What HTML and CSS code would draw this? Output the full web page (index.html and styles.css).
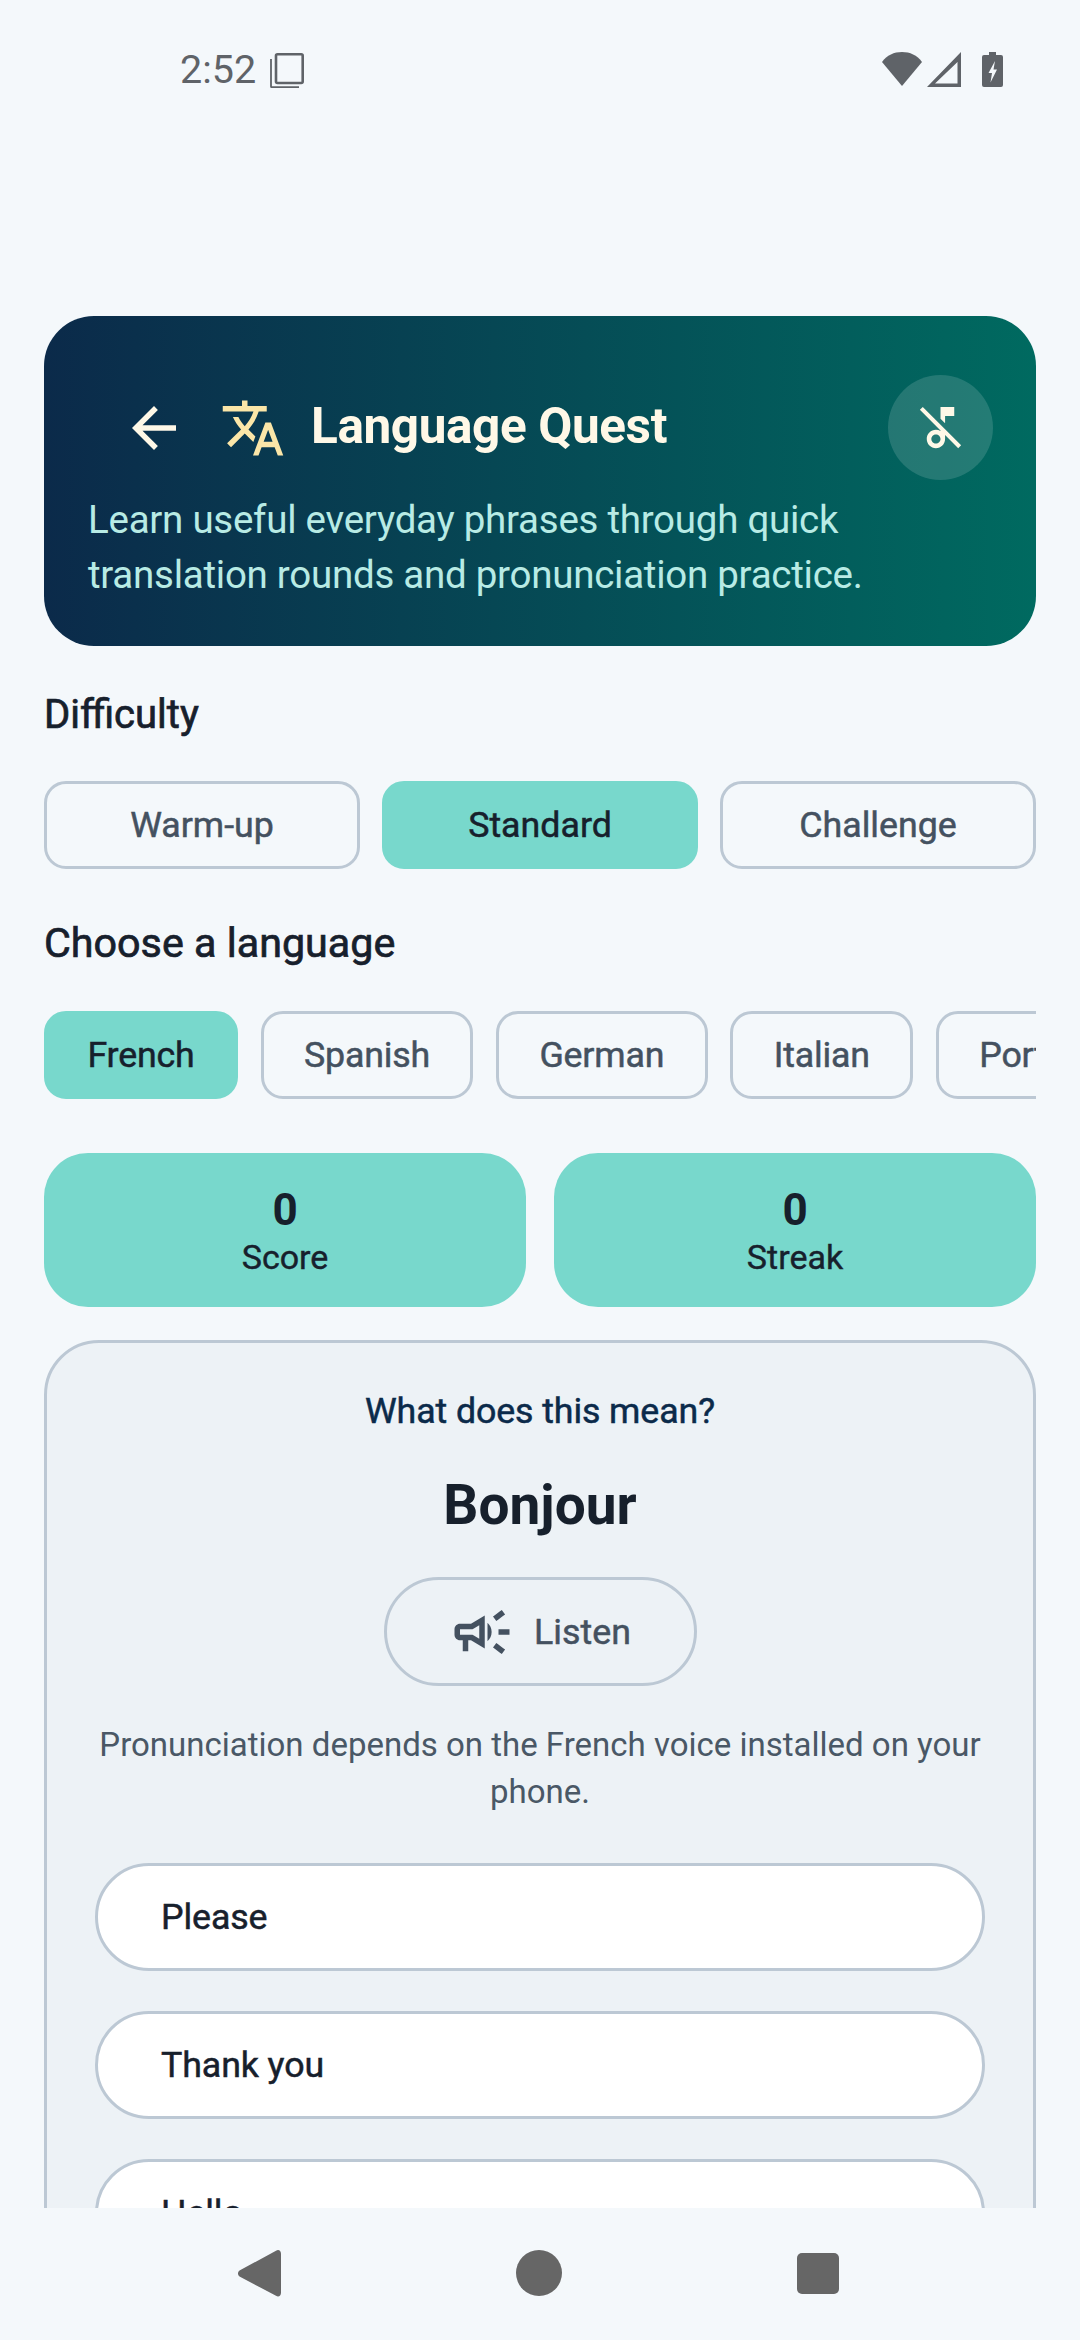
FILE: index.html
```html
<!DOCTYPE html>
<html lang="en">
<head>
<meta charset="utf-8">
<title>Language Quest</title>
<link rel="stylesheet" href="styles.css">
</head>
<body>
<div class="screen">
  <main class="content">
    <div class="status">
      <div class="status-left">
        <span class="time">2:52</span>
        <svg class="sb-copy" viewBox="0 0 34 35"><rect x="6" y="1.300" width="26.700" height="28.700" rx="1.500" fill="none" stroke="#5f6368" stroke-width="2.600"/><path d="M1 6v27.500a.7.7 0 0 0 .7.7H29" fill="none" stroke="#5f6368" stroke-width="1.800"/></svg>
      </div>
      <div class="status-right">
        <svg class="sb-wifi" viewBox="0 0 40 34"><path d="M0 10C5 3 12 0 20 0s15 3 20 10L20 34z" fill="#5f6368"/></svg>
        <svg class="sb-signal" viewBox="0 0 34 35"><path d="M34 0v35H0z M30.500 10 8 31.500h22.500z" fill="#5f6368" fill-rule="evenodd"/></svg>
        <svg class="sb-batt" viewBox="0 0 21 35"><path d="M7 0h7v3h5a2 2 0 0 1 2 2v28a2 2 0 0 1-2 2H2a2 2 0 0 1-2-2V5a2 2 0 0 1 2-2h5z" fill="#5f6368"/><path d="M13 9 6.500 21h3.500l-1.500 9.500 6.500-13h-3.500z" fill="#f4f8fb"/></svg>
      </div>
    </div>

    <section class="hero">
      <div class="hero-head">
        <svg class="ic-back" viewBox="0 0 24 24"><path d="M20 11H7.830l5.590-5.590L12 4l-8 8 8 8 1.410-1.410L7.830 13H20v-2z"/></svg>
        <svg class="ic-translate" viewBox="0 0 24 24"><path d="M12.870 15.070l-2.540-2.510.03-.03c1.740-1.940 2.980-4.170 3.710-6.530H17V4h-7V2H8v2H1v1.990h11.170C11.500 7.920 10.440 9.750 9 11.350 8.070 10.320 7.300 9.190 6.690 8h-2c.73 1.630 1.730 3.170 2.980 4.560l-5.090 5.020L4 19l5-5 3.110 3.110.76-2.040zM18.500 10h-2L12 22h2l1.120-3h4.750L21 22h2l-4.500-12zm-2.620 7l1.620-4.330L19.120 17h-3.240z"/></svg>
        <h1 class="title">Language Quest</h1>
        <div class="sound">
          <svg class="ic-music" viewBox="0 0 24 24"><path fill-rule="evenodd" d="M14 7h4V3h-6v5.180l2 2zM4.270 3L3 4.270l9 9v.28c-.59-.34-1.270-.55-2-.55-2.210 0-4 1.790-4 4s1.790 4 4 4 4-1.790 4-4v-1.730L19.730 21 21 19.730 4.270 3zM10 19c-1.100 0-2-.9-2-2s.9-2 2-2 2 .9 2 2-.9 2-2 2z"/></svg>
        </div>
      </div>
      <p class="sub">Learn useful everyday phrases through quick translation rounds and pronunciation practice.</p>
    </section>

    <h2 class="label label-diff">Difficulty</h2>
    <div class="levels">
      <div class="chip level">Warm-up</div>
      <div class="chip level on">Standard</div>
      <div class="chip level">Challenge</div>
    </div>

    <h2 class="label label-lang">Choose a language</h2>
    <div class="langs">
      <div class="chip lang on">French</div>
      <div class="chip lang">Spanish</div>
      <div class="chip lang">German</div>
      <div class="chip lang">Italian</div>
      <div class="chip lang">Portuguese</div>
    </div>

    <div class="stats">
      <div class="stat"><div class="num">0</div><div class="cap">Score</div></div>
      <div class="stat"><div class="num">0</div><div class="cap">Streak</div></div>
    </div>

    <section class="card">
      <div class="ask">What does this mean?</div>
      <div class="word">Bonjour</div>
      <div class="listen">
        <svg class="ic-campaign" viewBox="0 0 24 24"><path fill-rule="evenodd" d="M18 11v2h4v-2h-4zm-2 6.610c.96.71 2.210 1.650 3.200 2.390.4-.53.8-1.070 1.200-1.600-.99-.74-2.240-1.680-3.200-2.400-.4.54-.8 1.080-1.200 1.610zM20.400 5.600c-.4-.53-.8-1.070-1.200-1.600-.99.74-2.240 1.680-3.200 2.400.4.53.8 1.070 1.200 1.600.96-.72 2.210-1.650 3.200-2.400zM4 9c-1.100 0-2 .9-2 2v2c0 1.100.9 2 2 2h1v4h2v-4h1l5 3V6L8 9H4zm5.030 1.710L11 9.530v4.940l-1.970-1.180-.48-.29H4v-2h4.550l.48-.29zM15.500 12c0-1.330-.58-2.530-1.500-3.350v6.690c.92-.81 1.500-2.010 1.500-3.340z"/></svg>
        <span>Listen</span>
      </div>
      <p class="note">Pronunciation depends on the French voice installed on your phone.</p>
      <div class="options">
        <div class="opt">Please</div>
        <div class="opt">Thank you</div>
        <div class="opt">Hello</div>
        <div class="opt">Goodbye</div>
      </div>
    </section>
  </main>

  <nav class="nav">
    <svg class="nv-back" viewBox="0 0 43 47"><path d="M38 .8c2.500-1.800 5 0 5 3v39c0 3-2.500 4.800-5 3L1.500 26.500c-2-1.500-2-4.500 0-6z" fill="#666"/></svg>
    <span class="nv-home"></span>
    <span class="nv-recent"></span>
  </nav>
</div>
</body>
</html>
```

FILE: styles.css
```css
* { box-sizing: border-box; }
html, body { margin: 0; padding: 0; }
body { background: #f4f8fb; font-family: Roboto, "Noto Sans", sans-serif; color: #17202c; }
.screen { width: 1080px; height: 2340px; display: flex; flex-direction: column; overflow: hidden; }
.content { flex: 0 0 2208px; height: 2208px; overflow: hidden; padding: 0 44px; }

.status { height: 316px; display: flex; justify-content: space-between; align-items: flex-start; padding: 50px 33px 0 136px; }
.status-left { display: flex; align-items: center; gap: 14px; }
.time { font-size: 39.500px; line-height: 40px; color: #5f6368; }
.sb-copy { width: 34px; height: 35px; }
.status-right { display: flex; gap: 5px; padding-top: 2px; }
.sb-wifi { width: 40px; height: 34px; }
.sb-signal { width: 34px; height: 35px; }
.sb-batt { width: 21px; height: 35px; margin-left: 16px; }

.hero { height: 330px; border-radius: 50px; padding: 59px 43px 0 44px; background: linear-gradient(90deg, #0b2a4a 0%, #006a60 100%); }
.hero-head { display: flex; align-items: center; height: 105px; }
.ic-back { width: 66px; height: 66px; fill: #fff8e7; margin-left: 33px; flex: none; }
.ic-translate { width: 66px; height: 66px; fill: #fbe6a8; margin-left: 33px; flex: none; }
.title { margin: 0 0 3px 25px; font-size: 49.500px; line-height: 52px; font-weight: 700; letter-spacing: -0.4px; color: #fff8e7; flex: 1; }
.sound { width: 105px; height: 105px; border-radius: 50%; background: rgba(255,255,255,.14); display: flex; align-items: center; justify-content: center; flex: none; }
.ic-music { width: 55px; height: 55px; fill: #fff8e7; }
.sub { margin: 12px 0 0; font-size: 38.500px; line-height: 55px; letter-spacing: -0.26px; color: #b8ebe5; }

.label { margin: 0; font-size: 40px; line-height: 46px; font-weight: 400; -webkit-text-stroke: 0.7px currentColor; color: #17202c; }
.label-diff { padding-top: 46px; }
.label-lang { padding-top: 51px; font-size: 41.250px; }
.chip { display: flex; align-items: center; justify-content: center; border: 3px solid #bcc8d4; color: #445160; font-size: 35.750px; font-weight: 400; -webkit-text-stroke: 0.5px currentColor; }
.chip.on { background: #78d8cc; border-color: #78d8cc; color: #17202c; }
.levels { display: flex; gap: 22px; margin-top: 43px; }
.level { flex: 1; height: 88px; border-radius: 22px; }
.langs { display: flex; gap: 22.500px; margin-top: 45px; overflow: hidden; }
.lang { flex: none; height: 88px; border-radius: 22px; padding: 0 40.500px; letter-spacing: -0.2px; }

.stats { display: flex; gap: 28px; margin-top: 54px; }
.stat { flex: 1; height: 154px; padding-top: 4px; border-radius: 44px; background: #78d8cc; display: flex; flex-direction: column; align-items: center; justify-content: center; }
.num { font-size: 44px; line-height: 50px; font-weight: 700; color: #17202c; }
.cap { font-size: 34px; line-height: 44px; font-weight: 400; -webkit-text-stroke: 0.4px currentColor; color: #17202c; }

.card { margin-top: 33px; border: 3px solid #bcc8d4; border-radius: 55px; background: #edf2f6; padding: 46px 48px; display: flex; flex-direction: column; align-items: center; }
.ask { font-size: 35.750px; line-height: 44px; font-weight: 400; -webkit-text-stroke: 0.5px currentColor; color: #0b2a4a; letter-spacing: -0.1px; }
.word { margin-top: 38px; font-size: 55px; line-height: 68px; font-weight: 700; color: #17202c; }
.listen { margin-top: 38px; width: 313px; height: 109px; border: 3px solid #bcc8d4; border-radius: 55px; display: flex; align-items: center; justify-content: center; gap: 19px; color: #445160; font-size: 35.750px; font-weight: 400; -webkit-text-stroke: 0.5px currentColor; }
.ic-campaign { width: 66px; height: 66px; fill: #445160; }
.note { margin: 35px 0 0; font-size: 33px; line-height: 47px; color: #4a5866; text-align: center; }
.options { width: 100%; margin-top: 48px; display: flex; flex-direction: column; gap: 40px; }
.opt { height: 108px; border: 3px solid #bcc8d4; border-radius: 54px; background: #fff; padding-left: 63px; display: flex; align-items: center; font-size: 35.750px; font-weight: 400; -webkit-text-stroke: 0.5px currentColor; color: #17202c; letter-spacing: -0.1px; }

.nav { flex: 1; position: relative; background: #f4f8fb; }
.nv-back { position: absolute; left: 238px; top: 42px; width: 43px; height: 47px; }
.nv-home { position: absolute; left: 516px; top: 42px; width: 46px; height: 46px; border-radius: 50%; background: #666; }
.nv-recent { position: absolute; left: 797px; top: 45px; width: 42px; height: 41px; border-radius: 5px; background: #666; }
```
